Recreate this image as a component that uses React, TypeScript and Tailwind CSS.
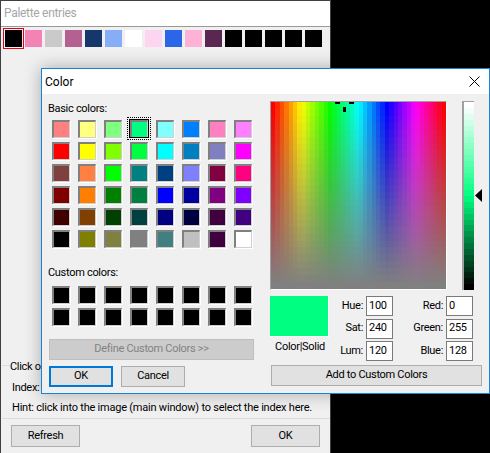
const palette = ["#000000", "#f382b5", "#cacaca", "#b46090", "#16376b", "#86adf7", "#ffffff", "#fdd5f1", "#2b65e8", "#feb2d6", "#5a2753", "#000000", "#000000", "#000000", "#000000", "#000000"];

const basicColors = [
  "#ff8080", "#ffff80", "#80ff80", "#00ff80", "#80ffff", "#0080ff", "#ff80c0", "#ff80ff",
  "#ff0000", "#ffff00", "#80ff00", "#00ff40", "#00ffff", "#0080c0", "#8080c0", "#ff00ff",
  "#804040", "#ff8040", "#00ff00", "#008080", "#004080", "#8080ff", "#800040", "#ff0080",
  "#800000", "#ff8000", "#008000", "#008040", "#0000ff", "#0000a0", "#800080", "#8000ff",
  "#400000", "#804000", "#004000", "#004040", "#000080", "#000040", "#400040", "#400080",
  "#000000", "#808000", "#808040", "#808080", "#408080", "#c0c0c0", "#400040", "#ffffff",
];

const hsl = (h: number, s: number, l: number) => `hsl(${h} ${s}% ${l}%)`;

function Swatch({ color, selected }: { color: string; selected?: boolean }) {
  return (
    <div className="relative h-[18px] w-[18px] border-t-2 border-l-2 border-r border-b border-t-[#808080] border-l-[#808080] border-r-[#d0d0d0] border-b-[#d0d0d0] shadow-[1px_1px_0_#ffffff]">
      <div className="h-full w-full" style={{ background: color }} />
      {selected && (
        <div className="absolute -left-[5px] -top-[5px] h-[23px] w-[24px] border border-dotted border-black outline-1 -outline-offset-3 outline-black" />
      )}
    </div>
  );
}

function SwatchGrid({ colors, selected }: { colors: string[]; selected?: number }) {
  return (
    <div className="ml-[4px] grid grid-cols-[repeat(8,18px)] gap-x-2 gap-y-1">
      {colors.map((c, i) => (
        <Swatch key={i} color={c} selected={i === selected} />
      ))}
    </div>
  );
}

function Spectrum() {
  const cols = 40;
  const rows = 27;
  const cells = [];
  for (let y = 0; y < rows; y++) {
    for (let x = 0; x < cols; x++) {
      cells.push(
        <rect key={`${x}-${y}`} x={x} y={y} width="1.1" height="1.1" fill={hsl((x / (cols - 1)) * 360, 100 - (y / (rows - 1)) * 100, 50)} />
      );
    }
  }
  return (
    <div className="relative h-[189px] w-[177px] border-t border-l border-r border-b border-t-[#a0a0a0] border-l-[#a0a0a0] border-r-white border-b-white">
      <svg viewBox={`0 0 ${cols} ${rows}`} preserveAspectRatio="none" shapeRendering="crispEdges" className="block h-full w-full">
        {cells}
      </svg>
      <div className="absolute left-[64px] top-0 h-[2px] w-[5px] bg-black" />
      <div className="absolute left-[78px] top-0 h-[2px] w-[5px] bg-black" />
      <div className="absolute left-[72px] top-[5px] h-[5px] w-[3px] bg-black" />
    </div>
  );
}

function LumBar() {
  const steps = 32;
  return (
    <div className="relative ml-[15px] h-[189px] w-[12px] border-t border-l-2 border-[#a0a0a0]">
      <div className="flex h-full flex-col">
        {Array.from({ length: steps }, (_, i) => (
          <div key={i} className="flex-1" style={{ background: hsl(150, 100, 100 - (i / (steps - 1)) * 100) }} />
        ))}
      </div>
      <svg width="8" height="13" viewBox="0 0 8 13" className="absolute -right-[9px] top-[87px]">
        <path d="M0 6.5L7 0v13z" fill="#000" />
      </svg>
    </div>
  );
}

function Field({ label, value }: { label: string; value: string }) {
  return (
    <div className="flex items-center justify-end gap-[3px]">
      <span className="whitespace-nowrap">{label}</span>
      <div className="flex h-[20px] w-[27px] shrink-0 items-center border border-[#7a7a7a] bg-white pl-[2px]">{value}</div>
    </div>
  );
}

function Btn({ children, className, focused }: { children: string; className: string; focused?: boolean }) {
  return (
    <div className={`flex h-[21px] items-center justify-center bg-[#e1e1e1] ${focused ? "border-2 border-[#0078d7]" : "border border-[#adadad]"} ${className}`}>
      {children}
    </div>
  );
}

function ColorDialog() {
  return (
    <div className="absolute left-[41px] top-[68px] h-[326px] w-[449px] border border-[#1883d7] bg-[#f0f0f0] shadow-[0_0_16px_rgba(0,0,0,0.3)]">
      <div className="flex h-[25px] items-center justify-between bg-white pl-[3px] pr-[9px] text-[12px] tracking-normal">
        <span>Color</span>
        <svg width="11" height="11" viewBox="0 0 11 11" stroke="#000" fill="none">
          <path d="M.5.5l10 10M10.5.5l-10 10" />
        </svg>
      </div>
      <div className="flex pl-[6px] pt-[8px]">
        <div className="w-[206px]">
          <div className="mb-[4px] h-[14px] leading-[14px]">Basic colors:</div>
          <SwatchGrid colors={basicColors} selected={3} />
          <div className="mt-[18px] mb-[6px] h-[14px] leading-[14px]">Custom colors:</div>
          <SwatchGrid colors={Array(16).fill("#000000")} />
          <div className="ml-[1px] mt-[13px] flex h-[21px] w-[205px] items-center justify-center border border-[#bfbfbf] bg-[#cccccc] text-[#838383]">
            Define Custom Colors &gt;&gt;
          </div>
          <div className="ml-[1px] mt-[6px] flex gap-2">
            <Btn focused className="w-[64px]">OK</Btn>
            <Btn className="w-[64px]">Cancel</Btn>
          </div>
        </div>
        <div className="ml-[16px] -mt-[1px] w-[212px]">
          <div className="flex">
            <Spectrum />
            <LumBar />
          </div>
          <div className="mt-[6px] flex">
            <div className="w-[60px]">
              <div className="h-[41px] w-[59px] border-b border-r border-white bg-[#00ff80]" />
              <div className="mt-[2px] text-center">Color|Solid</div>
            </div>
            <div className="ml-[9px] flex w-[54px] flex-col gap-[2.5px]">
              <Field label="Hue:" value="100" />
              <Field label="Sat:" value="240" />
              <Field label="Lum:" value="120" />
            </div>
            <div className="ml-[17px] flex w-[63px] flex-col gap-[2.5px]">
              <Field label="Red:" value="0" />
              <Field label="Green:" value="255" />
              <Field label="Blue:" value="128" />
            </div>
          </div>
          <Btn className="ml-[1px] mt-[4px] w-[211px]">Add to Custom Colors</Btn>
        </div>
      </div>
    </div>
  );
}

function PaletteWindow() {
  return (
    <div className="absolute left-0 top-0 h-[453px] w-[331px] border-t border-r border-l border-[#404040] bg-[#f0f0f0]">
      <div className="h-[26px] border-b border-[#999999] bg-white pl-[3px] pt-[5px] text-[12px] leading-[14px] text-[#a6a6a6]">Palette entries</div>
      <div className="flex gap-[3px] pl-[4px] pt-[3px]">
        {palette.map((c, i) => (
          <div key={i} className={i === 0 ? "h-[17px] w-[17px] outline-1 outline-offset-1 outline-red-600" : "h-[17px] w-[17px]"} style={{ background: c }} />
        ))}
      </div>
      <div className="absolute left-[1px] right-0 top-[364px] h-[1px] bg-[#dcdcdc]" />
      <div className="absolute left-[9px] top-[358px] bg-[#f0f0f0] pr-[3px]">Click o</div>
      <div className="absolute left-[11px] top-[379px]">Index:</div>
      <div className="absolute left-[11px] top-[399px] whitespace-nowrap tracking-[-0.22px]">Hint: click into the image (main window) to select the index here.</div>
      <div className="absolute left-[1px] right-0 top-[417px] h-[1px] bg-[#dcdcdc]" />
      <Btn className="absolute left-[10px] top-[424px] h-[22px] w-[69px]">Refresh</Btn>
      <Btn className="absolute left-[250px] top-[424px] h-[22px] w-[69px]">OK</Btn>
    </div>
  );
}

export default function App() {
  return (
    <div className="relative h-[453px] w-[490px] overflow-hidden bg-black font-['Roboto','Liberation_Sans',sans-serif] text-[11px] tracking-[-0.3px] text-black">
      <PaletteWindow />
      <ColorDialog />
    </div>
  );
}
